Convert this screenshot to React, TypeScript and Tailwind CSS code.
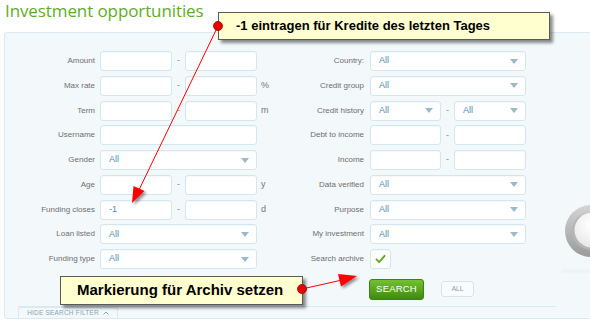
import type { ReactNode } from 'react'

const LABEL = 'text-[8px] text-[#6f6f6f] leading-none text-right font-["Liberation_Sans",Arial,sans-serif]'

function Box({ w, children }: { w: string; children?: ReactNode }) {
  return (
    <div className={`${w} h-full bg-white border border-[#d3e7f0] rounded-[3px] shadow-[inset_0_1px_1px_rgba(0,0,0,0.03)] flex items-center`}>
      {children}
    </div>
  )
}

function Select({ w, value = 'All' }: { w: string; value?: string }) {
  return (
    <Box w={w}>
      <span className="pl-[8px] text-[9px] text-[#4f8db7] flex-1">{value}</span>
      <svg width="8" height="5" viewBox="0 0 8 5" className="mr-[7px]">
        <path d="M0 0h8L4 5z" fill="#9db9c9" />
      </svg>
    </Box>
  )
}

function Dash({ w }: { w: string }) {
  return <span className={`${w} text-center text-[9px] text-[#888]`}>-</span>
}

function Row({ label, lw, children }: { label: string; lw: string; children: ReactNode }) {
  return (
    <div className="flex items-center h-[20px]">
      <span className={`${lw} ${LABEL}`}>{label}</span>
      {children}
    </div>
  )
}

function Range({ unit }: { unit?: string }) {
  return (
    <>
      <Box w="w-[72px]" />
      <Dash w="w-[13px]" />
      <Box w="w-[72px]" />
      {unit && <span className="pl-[4px] text-[9px] text-[#777]">{unit}</span>}
    </>
  )
}

export default function App() {
  return (
    <div className="relative w-[590px] h-[325px] overflow-hidden bg-white font-['Liberation_Sans',Arial,sans-serif]">
      <h1 className="h-[32px] pl-[5px] text-[17px] leading-[22px] text-[#5fae1f] font-['Open_Sans',sans-serif] tracking-[-0.1px]">
        Investment opportunities
      </h1>

      <div className="ml-[4px] w-[620px] h-[287px] border border-[#d8eaf2] rounded-[3px] bg-[#f3f8fb] flex flex-col">
        <div className="flex pt-[18px]">
          <div className="w-[265px] flex flex-col gap-[4.75px]">
            <Row label="Amount" lw="w-[95px] pr-[5px]"><Range /></Row>
            <Row label="Max rate" lw="w-[95px] pr-[5px]"><Range unit="%" /></Row>
            <Row label="Term" lw="w-[95px] pr-[5px]"><Range unit="m" /></Row>
            <Row label="Username" lw="w-[95px] pr-[5px]"><Box w="w-[157px]" /></Row>
            <Row label="Gender" lw="w-[95px] pr-[5px]"><Select w="w-[157px]" /></Row>
            <Row label="Age" lw="w-[95px] pr-[5px]"><Range unit="y" /></Row>
            <Row label="Funding closes" lw="w-[95px] pr-[5px]">
              <Box w="w-[72px]">
                <span className="pl-[8px] text-[9px] text-[#4f8db7]">-1</span>
              </Box>
              <Dash w="w-[13px]" />
              <Box w="w-[72px]" />
              <span className="pl-[4px] text-[9px] text-[#777]">d</span>
            </Row>
            <Row label="Loan listed" lw="w-[95px] pr-[5px]"><Select w="w-[157px]" /></Row>
            <Row label="Funding type" lw="w-[95px] pr-[5px]"><Select w="w-[157px]" /></Row>
          </div>

          <div className="flex flex-col gap-[4.75px]">
            <Row label="Country:" lw="w-[100px] pr-[6px]"><Select w="w-[156px]" /></Row>
            <Row label="Credit group" lw="w-[100px] pr-[6px]"><Select w="w-[156px]" /></Row>
            <Row label="Credit history" lw="w-[100px] pr-[6px]">
              <Select w="w-[71px]" />
              <Dash w="w-[13px]" />
              <Select w="w-[72px]" />
            </Row>
            <Row label="Debt to income" lw="w-[100px] pr-[6px]">
              <Box w="w-[71px]" />
              <Dash w="w-[13px]" />
              <Box w="w-[72px]" />
            </Row>
            <Row label="Income" lw="w-[100px] pr-[6px]">
              <Box w="w-[71px]" />
              <Dash w="w-[13px]" />
              <Box w="w-[72px]" />
            </Row>
            <Row label="Data verified" lw="w-[100px] pr-[6px]"><Select w="w-[156px]" /></Row>
            <Row label="Purpose" lw="w-[100px] pr-[6px]"><Select w="w-[156px]" /></Row>
            <Row label="My investment" lw="w-[100px] pr-[6px]"><Select w="w-[156px]" /></Row>
            <Row label="Search archive" lw="w-[100px] pr-[6px]">
              <Box w="w-[21px]">
                <svg width="21" height="18" viewBox="0 0 21 18">
                  <path d="M6 9.5l3 3 6-7" fill="none" stroke="#5aab1e" strokeWidth="2" strokeLinecap="round" strokeLinejoin="round" />
                </svg>
              </Box>
            </Row>
            <div className="flex items-start h-[21px] mt-[5px] pl-[99px]">
              <button className="w-[55px] h-[21px] rounded-[3px] bg-gradient-to-b from-[#74c033] to-[#3e8c0e] border border-[#3b850c] text-white text-[9.5px] tracking-[0.2px]">
                SEARCH
              </button>
              <button className="ml-[17px] mt-[2px] w-[33px] h-[16px] rounded-[3px] bg-[#f9fcfd] border border-[#d4e5ee] text-[#8a99a3] text-[6.5px]">
                ALL
              </button>
            </div>
          </div>
        </div>

        <div className="mt-[6px] ml-[13px] w-[538px] border-t border-[#d8eaf2]" />
        <div className="mt-auto ml-[13px] w-[100px] h-[14px] border border-b-0 border-[#d8eaf2] rounded-t-[3px] bg-[#f3f8fb] flex items-center justify-center gap-[4px] text-[6.5px] text-[#8aa4b3] tracking-[0.2px]">
          HIDE SEARCH FILTER
          <svg width="6" height="4" viewBox="0 0 6 4">
            <path d="M0.5 3.5L3 1l2.5 2.5" fill="none" stroke="#8aa4b3" strokeWidth="1" />
          </svg>
        </div>
      </div>

      {/* knob at the right edge */}
      <svg className="absolute left-[562px] top-[202px]" width="60" height="60" viewBox="0 0 60 60">
        <defs>
          <linearGradient id="ring" x1="0" y1="0" x2="0" y2="1">
            <stop offset="0" stopColor="#d4d4d4" />
            <stop offset="1" stopColor="#9a9a9a" />
          </linearGradient>
          <radialGradient id="inner" cx="0.45" cy="0.35" r="0.7">
            <stop offset="0" stopColor="#ffffff" />
            <stop offset="1" stopColor="#e6e6e6" />
          </radialGradient>
        </defs>
        <circle cx="29" cy="29" r="26" fill="url(#ring)" />
        <circle cx="29" cy="29" r="19" fill="#b5b5b5" />
        <circle cx="30" cy="28" r="17.5" fill="url(#inner)" />
      </svg>
      <div className="absolute left-[562px] top-[270px] w-[30px] h-[2px] bg-[#e9eef1] blur-[1px]" />

      {/* annotations */}
      <div className="absolute left-[218px] top-[12px] w-[332px] h-[28px] bg-[#ffffcf] border border-[#5a5a5a] shadow-[3px_3px_3px_rgba(0,0,0,0.45)] flex items-center pl-[17px] text-[13px] font-bold text-black">
        -1 eintragen für Kredite des letzten Tages
      </div>
      <div className="absolute left-[60px] top-[276px] w-[243px] h-[29px] bg-[#ffffcf] border border-[#5a5a5a] shadow-[3px_3px_3px_rgba(0,0,0,0.45)] flex items-center pl-[16px] text-[15px] font-bold text-black">
        Markierung für Archiv setzen
      </div>

      <svg className="absolute inset-0 pointer-events-none" width="590" height="325" viewBox="0 0 590 325">
        <defs>
          <filter id="sh" x="-50%" y="-50%" width="200%" height="200%">
            <feDropShadow dx="2" dy="2" stdDeviation="1.5" floodColor="#000" floodOpacity="0.45" />
          </filter>
        </defs>
        <line x1="218" y1="26" x2="137" y2="194" stroke="#ff0000" strokeWidth="1" />
        <polygon points="132,203 144.5,191 133.5,186" fill="#ff0000" filter="url(#sh)" />
        <line x1="302" y1="289" x2="342" y2="280" stroke="#ff0000" strokeWidth="1" />
        <polygon points="357,276 341,286.5 338,274" fill="#ff0000" filter="url(#sh)" />
        <circle cx="218" cy="26" r="4.5" fill="#e60000" stroke="#a00000" strokeWidth="0.8" />
        <circle cx="302" cy="289" r="4.5" fill="#e60000" stroke="#a00000" strokeWidth="0.8" />
      </svg>
    </div>
  )
}
